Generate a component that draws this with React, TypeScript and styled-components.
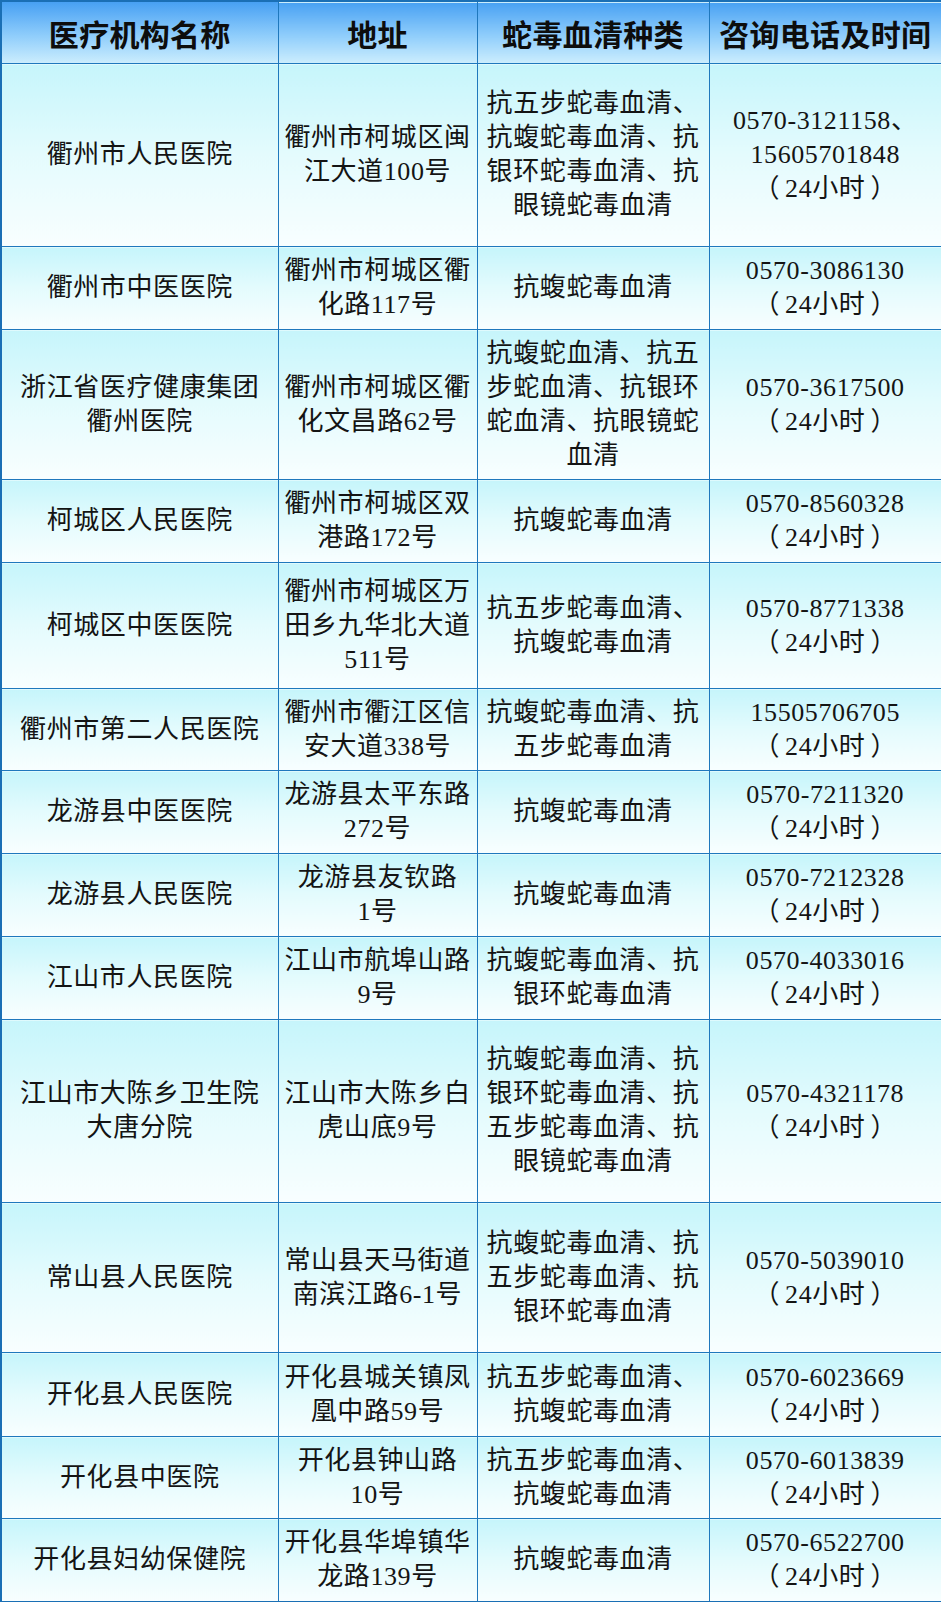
import styled, { createGlobalStyle } from 'styled-components'

const GlobalStyle = createGlobalStyle`
  html, body {
    margin: 0;
    padding: 0;
    background: #ffffff;
  }
`

const Table = styled.table`
  width: 941px;
  border-collapse: collapse;
  table-layout: fixed;
  border: 2px solid #1a6fb5;
  font-family: "Liberation Serif", "Noto Sans CJK SC", serif;
  color: #141414;
`

const HeadCell = styled.th`
  height: 61px;
  padding: 0;
  border: 1px solid #1f78bd;
  background: linear-gradient(to bottom, #47a0f3 0%, #8fcdfb 55%, #cbedfd 100%);
  font-size: 30px;
  font-weight: 700;
  letter-spacing: 0.3px;
  text-align: center;
  vertical-align: middle;
  color: #0d0d0d;
`

const Row = styled.tr<{ $h: number }>`
  height: ${(p) => p.$h}px;
`

const Cell = styled.td`
  padding: 0 4px;
  border: 1px solid #1f78bd;
  background: linear-gradient(to bottom, #c6f5fb 0%, #e4fbfd 50%, #f8feff 100%);
  font-size: 26px;
  line-height: 34px;
  letter-spacing: 0.6px;
  text-align: center;
  vertical-align: middle;
  white-space: pre-line;
`

const Line = styled.div``

const Paren = styled.span<{ $open?: boolean }>`
  ${(p) => (p.$open ? 'margin-right: 5px;' : 'margin-left: 5px;')}
`

type Clinic = {
  name: string
  address: string
  serum: string
  phones: string[]
  h: number
}

const clinics: Clinic[] = [
  {
    name: '衢州市人民医院',
    address: '衢州市柯城区闽\n江大道100号',
    serum: '抗五步蛇毒血清、\n抗蝮蛇毒血清、抗\n银环蛇毒血清、抗\n眼镜蛇毒血清',
    phones: ['0570-3121158、', '15605701848'],
    h: 183,
  },
  {
    name: '衢州市中医医院',
    address: '衢州市柯城区衢\n化路117号',
    serum: '抗蝮蛇毒血清',
    phones: ['0570-3086130'],
    h: 83,
  },
  {
    name: '浙江省医疗健康集团\n衢州医院',
    address: '衢州市柯城区衢\n化文昌路62号',
    serum: '抗蝮蛇血清、抗五\n步蛇血清、抗银环\n蛇血清、抗眼镜蛇\n血清',
    phones: ['0570-3617500'],
    h: 150,
  },
  {
    name: '柯城区人民医院',
    address: '衢州市柯城区双\n港路172号',
    serum: '抗蝮蛇毒血清',
    phones: ['0570-8560328'],
    h: 83,
  },
  {
    name: '柯城区中医医院',
    address: '衢州市柯城区万\n田乡九华北大道\n511号',
    serum: '抗五步蛇毒血清、\n抗蝮蛇毒血清',
    phones: ['0570-8771338'],
    h: 126,
  },
  {
    name: '衢州市第二人民医院',
    address: '衢州市衢江区信\n安大道338号',
    serum: '抗蝮蛇毒血清、抗\n五步蛇毒血清',
    phones: ['15505706705'],
    h: 82,
  },
  {
    name: '龙游县中医医院',
    address: '龙游县太平东路\n272号',
    serum: '抗蝮蛇毒血清',
    phones: ['0570-7211320'],
    h: 83,
  },
  {
    name: '龙游县人民医院',
    address: '龙游县友钦路\n1号',
    serum: '抗蝮蛇毒血清',
    phones: ['0570-7212328'],
    h: 83,
  },
  {
    name: '江山市人民医院',
    address: '江山市航埠山路\n9号',
    serum: '抗蝮蛇毒血清、抗\n银环蛇毒血清',
    phones: ['0570-4033016'],
    h: 83,
  },
  {
    name: '江山市大陈乡卫生院\n大唐分院',
    address: '江山市大陈乡白\n虎山底9号',
    serum: '抗蝮蛇毒血清、抗\n银环蛇毒血清、抗\n五步蛇毒血清、抗\n眼镜蛇毒血清',
    phones: ['0570-4321178'],
    h: 183,
  },
  {
    name: '常山县人民医院',
    address: '常山县天马街道\n南滨江路6-1号',
    serum: '抗蝮蛇毒血清、抗\n五步蛇毒血清、抗\n银环蛇毒血清',
    phones: ['0570-5039010'],
    h: 150,
  },
  {
    name: '开化县人民医院',
    address: '开化县城关镇凤\n凰中路59号',
    serum: '抗五步蛇毒血清、\n抗蝮蛇毒血清',
    phones: ['0570-6023669'],
    h: 84,
  },
  {
    name: '开化县中医院',
    address: '开化县钟山路\n10号',
    serum: '抗五步蛇毒血清、\n抗蝮蛇毒血清',
    phones: ['0570-6013839'],
    h: 82,
  },
  {
    name: '开化县妇幼保健院',
    address: '开化县华埠镇华\n龙路139号',
    serum: '抗蝮蛇毒血清',
    phones: ['0570-6522700'],
    h: 83,
  },
]

export default function App() {
  return (
    <>
      <GlobalStyle />
      <Table>
        <colgroup>
          <col style={{ width: 277 }} />
          <col style={{ width: 199 }} />
          <col style={{ width: 232 }} />
          <col style={{ width: 233 }} />
        </colgroup>
        <thead>
          <tr>
            <HeadCell>医疗机构名称</HeadCell>
            <HeadCell>地址</HeadCell>
            <HeadCell>蛇毒血清种类</HeadCell>
            <HeadCell>咨询电话及时间</HeadCell>
          </tr>
        </thead>
        <tbody>
          {clinics.map((c) => (
            <Row key={c.name} $h={c.h}>
              <Cell>{c.name}</Cell>
              <Cell>{c.address}</Cell>
              <Cell>{c.serum}</Cell>
              <Cell>
                {c.phones.map((p) => (
                  <Line key={p}>{p}</Line>
                ))}
                <Line>
                  <Paren $open>（</Paren>24小时<Paren>）</Paren>
                </Line>
              </Cell>
            </Row>
          ))}
        </tbody>
      </Table>
    </>
  )
}
